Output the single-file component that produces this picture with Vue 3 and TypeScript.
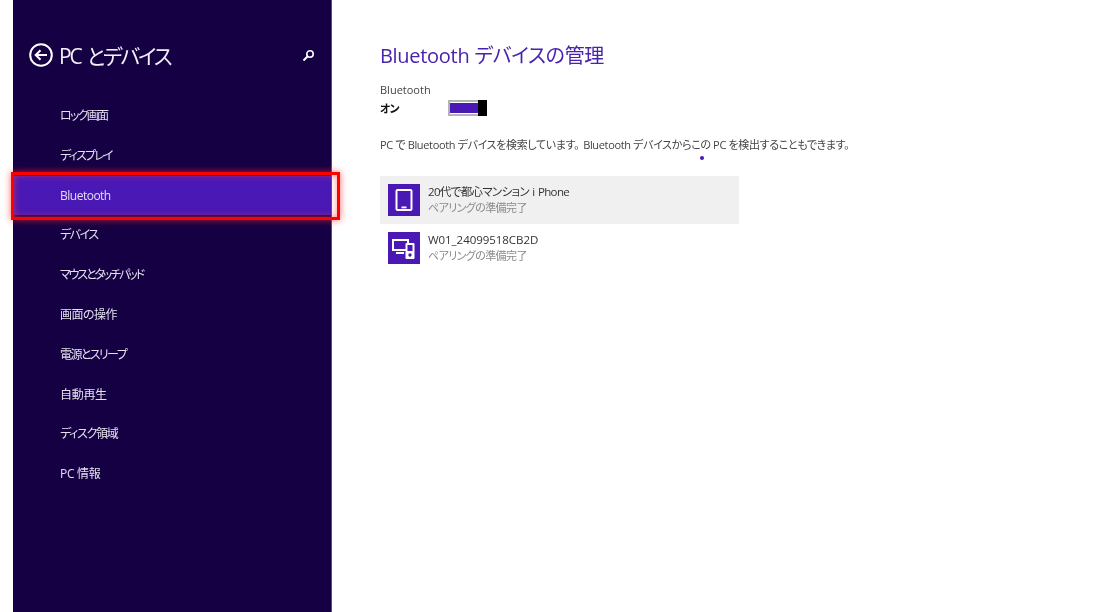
<template>
  <div class="screen">
    <aside class="sidebar">
      <header class="side-header">
        <svg class="back" width="24" height="24" viewBox="0 0 24 24" fill="none" stroke="#fff" stroke-width="2">
          <circle cx="12" cy="12" r="10.8" />
          <path d="M18 12H7M11.5 7.2 6.7 12l4.8 4.8" />
        </svg>
        <h2>PC とデバイス</h2>
        <svg class="search" width="13" height="13" viewBox="0 0 13 13" fill="none" stroke="#fff">
          <circle cx="8" cy="5" r="3.2" stroke-width="1.6" />
          <path d="M5.5 7.5 1.5 11.5" stroke-width="2" />
        </svg>
      </header>
      <nav class="menu">
        <a
          v-for="item in menu"
          :key="item.label"
          class="menu-item"
          :class="{ active: item.label === 'Bluetooth' }"
          :style="{ letterSpacing: item.track + 'px' }"
        >{{ item.label }}</a>
      </nav>
    </aside>

    <main class="content">
      <h1>Bluetooth デバイスの管理</h1>
      <div class="toggle-label">Bluetooth</div>
      <div class="toggle-row">
        <strong>オン</strong>
        <div class="toggle"><span class="fill"></span><span class="thumb"></span></div>
      </div>
      <p class="note">PC で Bluetooth デバイスを検索しています<span class="stop">。</span>Bluetooth デバイスからこの PC を検出することもできます。<i class="dot"></i></p>
      <ul class="devices">
        <li v-for="(d, i) in devices" :key="d.name" class="device" :class="{ hover: i === 0 }">
          <span class="tile">
            <svg v-if="d.kind === 'phone'" width="32" height="32" viewBox="0 0 32 32">
              <rect x="8.5" y="6" width="15" height="20" rx="1" fill="none" stroke="#fff" stroke-width="2" />
              <rect x="13.5" y="22.5" width="5" height="1.8" fill="#fff" />
            </svg>
            <svg v-else width="32" height="32" viewBox="0 0 32 32">
              <rect x="5" y="8" width="15" height="10" fill="none" stroke="#fff" stroke-width="2" />
              <path d="M8 21h8" stroke="#fff" stroke-width="2" />
              <rect x="17.5" y="11" width="9" height="16" rx="1" fill="#fff" />
              <rect x="19.5" y="13" width="5" height="6" fill="#4a18b4" />
              <circle cx="22" cy="23" r="1.7" fill="#4a18b4" />
            </svg>
          </span>
          <span class="info">
            <span class="name" :style="{ letterSpacing: d.track + 'px' }">{{ d.name }}</span>
            <span class="status">ペアリングの準備完了</span>
          </span>
        </li>
      </ul>
    </main>
  </div>
</template>

<script setup lang="ts">
// track: letter spacing per label, the original kana run narrower than the kanji
const menu: { label: string; track: number }[] = [
  { label: 'ロック画面', track: -1.7 },
  { label: 'ディスプレイ', track: -1.8 },
  { label: 'Bluetooth', track: -0.5 },
  { label: 'デバイス', track: -1.5 },
  { label: 'マウスとタッチパッド', track: -2.1 },
  { label: '画面の操作', track: -0.5 },
  { label: '電源とスリープ', track: -1.6 },
  { label: '自動再生', track: -0.3 },
  { label: 'ディスク領域', track: -1.3 },
  { label: 'PC 情報', track: -0.3 },
]

const devices = [
  { name: '20代で都心マンション i Phone', kind: 'phone', track: -0.65 },
  { name: 'W01_24099518CB2D', kind: 'multi', track: -0.05 },
]
</script>

<style>
html, body { margin: 0; background: #fff; }
</style>

<style scoped>
.screen {
  display: flex;
  width: 1102px;
  height: 612px;
  overflow: hidden;
  background: #fff;
  font-family: "Open Sans", "Noto Sans CJK JP", sans-serif;
  font-feature-settings: "palt";
  filter: blur(0.4px);
}

.sidebar {
  width: 319px;
  margin-left: 13px;
  box-sizing: border-box;
  flex: none;
  background: #150044;
  border-right: 1px solid #5a4a86;
  color: #fff;
}

.side-header {
  display: flex;
  align-items: center;
  height: 28px;
  margin-top: 41px;
  padding-left: 16px;
  padding-right: 16px;
}
.side-header h2 {
  margin: 0 0 0 6px;
  font-size: 21px;
  font-weight: 400;
  letter-spacing: -2.2px;
  word-spacing: 3px;
  white-space: nowrap;
  color: #f2f0f6;
}
.search { margin-left: auto; }

.menu {
  display: flex;
  flex-direction: column;
  margin-top: 27px;
}
.menu-item {
  position: relative;
  height: 39.8px;
  line-height: 39.8px;
  padding-left: 47px;
  font-size: 12px;
  color: #e4e0ee;
}
.menu-item.active {
  background: #4a18b4;
  color: #e4dcf6;
}
.menu-item.active::after {
  content: "";
  position: absolute;
  left: -2px;
  right: -9px;
  top: -4px;
  bottom: -5px;
  border: 3px solid #fe0000;
  box-shadow: 0 0 7px rgba(255, 40, 40, 0.7), inset 0 0 7px rgba(255, 60, 60, 0.6);
}

.content {
  flex: 1;
  padding: 42px 0 0 48px;
  color: #333;
}
h1 {
  margin: 0;
  font-size: 20px;
  line-height: 27px;
  font-weight: 400;
  letter-spacing: -0.3px;
  color: #4a22ae;
}
.toggle-label {
  margin-top: 13px;
  font-size: 11px;
  line-height: 15px;
  color: #444;
}
.toggle-row {
  display: flex;
  align-items: center;
  height: 18px;
  margin-top: 2px;
}
.toggle-row strong {
  width: 68px;
  font-size: 11px;
  letter-spacing: -1px;
  color: #111;
}
.toggle {
  display: flex;
  width: 39px;
  height: 16px;
  box-sizing: border-box;
  border: 2px solid #b4b4b4;
  border-right: none;
}
.fill { flex: 1; background: #4a18b4; margin: 1px 0; }
.thumb { width: 9px; margin: -2px 0; background: #000; }
.note {
  position: relative;
  margin: 20px 0 0;
  font-size: 11px;
  line-height: 16px;
  letter-spacing: -0.35px;
  color: #444;
  white-space: nowrap;
}
.stop { margin-right: 4px; }
.dot {
  position: absolute;
  left: 320px;
  top: 19px;
  width: 4px;
  height: 4px;
  border-radius: 50%;
  background: #4a18b4;
}
.devices {
  list-style: none;
  margin: 23px 0 0;
  padding: 0;
}
.device {
  display: flex;
  align-items: center;
  gap: 8px;
  width: 359px;
  height: 48px;
  padding-left: 8px;
  box-sizing: border-box;
}
.device.hover { background: #f0f0f0; }
.tile {
  display: flex;
  width: 32px;
  height: 32px;
  background: #4a18b4;
}
.info { display: flex; flex-direction: column; }
.name {
  font-size: 11.5px;
  line-height: 16px;
  word-spacing: 1px;
  color: #333;
}
.status {
  font-size: 11px;
  line-height: 16px;
  letter-spacing: -0.6px;
  color: #8a8a8a;
}
</style>
